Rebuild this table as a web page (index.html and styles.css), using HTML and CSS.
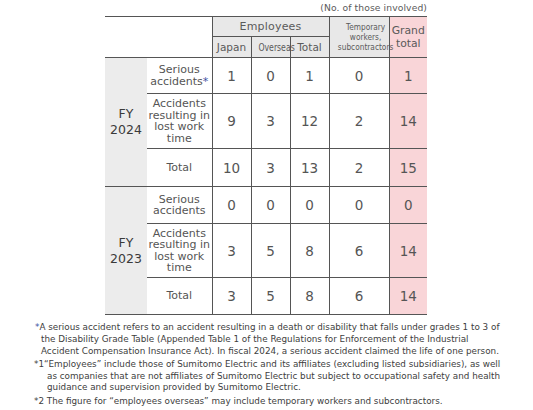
FILE: index.html
```html
<!DOCTYPE html>
<html>
<head>
<meta charset="utf-8">
<link rel="stylesheet" href="styles.css">
</head>
<body>
<div class="wrap">
  <div class="unit">(No. of those involved)</div>
  <table class="tbl">
    <colgroup>
      <col class="c-fy"><col class="c-lbl"><col class="c-n"><col class="c-n"><col class="c-n"><col class="c-tmp"><col class="c-gt">
    </colgroup>
    <tr class="h1">
      <th class="blank" colspan="2" rowspan="2"></th>
      <th class="hd emp" colspan="3">Employees</th>
      <th class="hd tmp" rowspan="2"><span class="cond">Temporary<br>workers,<br>subcontractors</span></th>
      <th class="hd gt" rowspan="2">Grand<br>total</th>
    </tr>
    <tr class="h2">
      <th class="hd sub">Japan</th>
      <th class="hd sub"><span class="cond">Overseas</span></th>
      <th class="hd sub">Total</th>
    </tr>
    <tr class="r1">
      <th class="fy grp" rowspan="3">FY<br>2024</th>
      <th class="lbl">Serious<br>accidents<span class="ast">*</span></th>
      <td>1</td><td>0</td><td>1</td><td>0</td><td class="gt">1</td>
    </tr>
    <tr class="r2">
      <th class="lbl">Accidents<br>resulting in<br>lost work<br>time</th>
      <td>9</td><td>3</td><td>12</td><td>2</td><td class="gt">14</td>
    </tr>
    <tr class="r3 grpend">
      <th class="lbl">Total</th>
      <td>10</td><td>3</td><td>13</td><td>2</td><td class="gt">15</td>
    </tr>
    <tr class="r4">
      <th class="fy grp" rowspan="3">FY<br>2023</th>
      <th class="lbl">Serious<br>accidents</th>
      <td>0</td><td>0</td><td>0</td><td>0</td><td class="gt">0</td>
    </tr>
    <tr class="r5">
      <th class="lbl">Accidents<br>resulting in<br>lost work<br>time</th>
      <td>3</td><td>5</td><td>8</td><td>6</td><td class="gt">14</td>
    </tr>
    <tr class="r6 grpend">
      <th class="lbl">Total</th>
      <td>3</td><td>5</td><td>8</td><td>6</td><td class="gt">14</td>
    </tr>
  </table>
</div>
<div class="notes">
  <p class="note n0"><span class="ast">*</span>A serious accident refers to an accident resulting in a death or disability that falls under grades 1 to 3 of<br>the Disability Grade Table (Appended Table 1 of the Regulations for Enforcement of the Industrial<br>Accident Compensation Insurance Act). In fiscal 2024, a serious accident claimed the life of one person.</p>
  <p class="note n1">*1“Employees” include those of Sumitomo Electric and its affiliates (excluding listed subsidiaries), as well<br>as companies that are not affiliates of Sumitomo Electric but subject to occupational safety and health<br>guidance and supervision provided by Sumitomo Electric.</p>
  <p class="note n2">*2 The figure for “employees overseas” may include temporary workers and subcontractors.</p>
</div>
</body>
</html>
```
FILE: styles.css
```css
* { box-sizing: border-box; }
html, body { margin: 0; padding: 0; background: #fff; }
body {
  font-family: "DejaVu Sans", "Liberation Sans", sans-serif;
  color: #555;
}
.wrap {
  width: 322px;
  margin-left: 105px;
}
.unit {
  text-align: right;
  font-size: 9.2px;
  line-height: 16px;
  color: #5a5a5a;
  letter-spacing: 0.1px;
}
.tbl {
  width: 322px;
  border-collapse: collapse;
  table-layout: fixed;
  border-top: 1px solid #555;
  border-bottom: 1px solid #555;
}
.c-fy { width: 42px; }
.c-lbl { width: 65px; }
.c-n { width: 39px; }
.c-tmp { width: 60px; }
.c-gt { width: 38px; }
th, td {
  padding: 0;
  text-align: center;
  vertical-align: middle;
  font-weight: 400;
}
.h1 { height: 20px; }
.h2 { height: 21px; }
.r1 { height: 36px; }
.r2 { height: 55px; }
.r3 { height: 38px; }
.r4 { height: 37px; }
.r5 { height: 54px; }
.r6 { height: 37px; }
.blank { background: #fff; border-bottom: 1px solid #555; }
.hd {
  background: #e8e8e8;
  border-left: 1px solid #555;
  border-bottom: 1px solid #555;
  font-size: 10px;
  line-height: 12px;
  color: #5a5a5a;
}
.emp { font-size: 11px; letter-spacing: 0.2px; }
.sub { font-size: 10.5px; }
.tmp { font-size: 9.5px; line-height: 10px; }
.cond { display: inline-block; transform: scaleX(0.74); white-space: nowrap; }
.tmp .cond { transform: scaleX(0.78); }
.hd.gt { font-size: 10.8px; line-height: 13px; background: #f9d5d8; }
.gt { background: #f9d5d8; }
.fy {
  background: #ececec;
  font-size: 12.5px;
  line-height: 16px;
  color: #3a3a3a;
  border-bottom: 1px solid #555;
}
.lbl {
  font-size: 11px;
  line-height: 11.5px;
  border-bottom: 1px solid #555;
  border-right: 1px solid #555;
}
td {
  font-size: 13.5px;
  border-left: 1px solid #555;
  border-bottom: 1px solid #555;
}
.ast { color: #3d4fa1; }
.notes {
  margin: 7px 0 0 34px;
  font-size: 8.8px;
  line-height: 11.8px;
  color: #404040;
  white-space: nowrap;
}
.note { margin: 0 0 1.5px 0; }
.n0 { padding-left: 7px; text-indent: -6px; }
.n1 { padding-left: 13px; text-indent: -13px; }
.n2 { padding-left: 13px; text-indent: -13px; }
```
